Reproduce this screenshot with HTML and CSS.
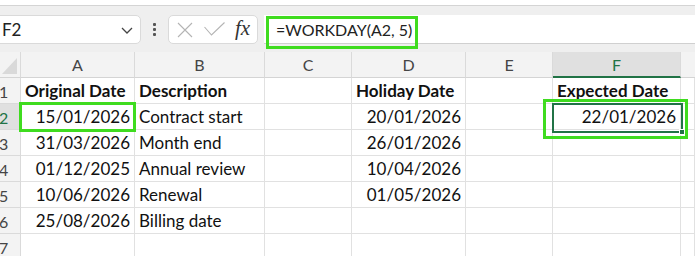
FILE: index.html
```html
<!DOCTYPE html>
<html>
<head>
<meta charset="utf-8">
<link rel="stylesheet" href="styles.css">
</head>
<body>
<div class="app">
  <div class="ribbon-edge"></div>
  <div class="formula-row">
    <div class="namebox">
      <span class="name">F2</span>
      <svg class="chev" width="12" height="7" viewBox="0 0 12 7"><path d="M1 1 L6 6 L11 1" fill="none" stroke="#444" stroke-width="1.3"/></svg>
    </div>
    <div class="dots"><i></i><i></i><i></i></div>
    <div class="fxbox">
      <svg width="16" height="16" viewBox="0 0 16 16" class="ic-x"><path d="M1 1 L15 15 M15 1 L1 15" stroke="#b4b4b4" stroke-width="1.1" fill="none"/></svg>
      <svg width="21" height="15" viewBox="0 0 21 15" class="ic-ok"><path d="M0.5 5 L7.5 13 L20.5 0.5" stroke="#b4b4b4" stroke-width="1.1" fill="none"/></svg>
      <span class="fx">fx</span>
    </div>
    <div class="formula">=WORKDAY(A2, 5)</div>
  </div>
  <div class="grid">
    <div class="corner"><span class="tri"></span></div>
    <div class="ch">A</div>
    <div class="ch">B</div>
    <div class="ch">C</div>
    <div class="ch">D</div>
    <div class="ch">E</div>
    <div class="ch sel">F</div>
    <div class="ch last"></div>

    <div class="rh">1</div>
    <div class="c b">Original Date</div>
    <div class="c b">Description</div>
    <div class="c"></div>
    <div class="c b">Holiday Date</div>
    <div class="c"></div>
    <div class="c b">Expected Date</div>
    <div class="c"></div>

    <div class="rh sel">2</div>
    <div class="c r">15/01/2026</div>
    <div class="c">Contract start</div>
    <div class="c"></div>
    <div class="c r">20/01/2026</div>
    <div class="c"></div>
    <div class="c r">22/01/2026</div>
    <div class="c"></div>

    <div class="rh">3</div>
    <div class="c r">31/03/2026</div>
    <div class="c">Month end</div>
    <div class="c"></div>
    <div class="c r">26/01/2026</div>
    <div class="c"></div>
    <div class="c"></div>
    <div class="c"></div>

    <div class="rh">4</div>
    <div class="c r">01/12/2025</div>
    <div class="c">Annual review</div>
    <div class="c"></div>
    <div class="c r">10/04/2026</div>
    <div class="c"></div>
    <div class="c"></div>
    <div class="c"></div>

    <div class="rh">5</div>
    <div class="c r">10/06/2026</div>
    <div class="c">Renewal</div>
    <div class="c"></div>
    <div class="c r">01/05/2026</div>
    <div class="c"></div>
    <div class="c"></div>
    <div class="c"></div>

    <div class="rh">6</div>
    <div class="c r">25/08/2026</div>
    <div class="c">Billing date</div>
    <div class="c"></div>
    <div class="c"></div>
    <div class="c"></div>
    <div class="c"></div>
    <div class="c"></div>

    <div class="rh">7</div>
    <div class="c"></div>
    <div class="c"></div>
    <div class="c"></div>
    <div class="c"></div>
    <div class="c"></div>
    <div class="c"></div>
    <div class="c"></div>
  </div>

  <div class="active-cell"><span class="handle"></span></div>
  <div class="hl hl-formula"></div>
  <div class="hl hl-a2"></div>
  <div class="hl hl-f2"></div>
</div>
</body>
</html>
```
FILE: styles.css
```css
* { box-sizing: border-box; }
html, body { margin: 0; padding: 0; }
body {
  width: 695px;
  height: 256px;
  overflow: hidden;
  background: #ffffff;
  font-family: "Lato", "Noto Sans", sans-serif;
  color: #111;
}
.app {
  position: relative;
  width: 695px;
  height: 256px;
  overflow: hidden;
}
.ribbon-edge {
  height: 6px;
  background: #ffffff;
  border-bottom: 1px solid #d4d4d4;
  box-shadow: 0 1px 2px rgba(0,0,0,0.12);
}
.formula-row {
  height: 46px;
  background: #efefef;
  display: flex;
  align-items: flex-start;
  padding-top: 9px;
}
.namebox {
  margin-left: -8px;
  width: 149px;
  height: 29px;
  background: #fff;
  border: 1px solid #dadada;
  border-radius: 5px;
  display: flex;
  align-items: center;
  justify-content: space-between;
  padding: 0 7px 0 8px;
}
.name { font-size: 17px; color: #222; padding-left: 1px; }
.chev { margin-top: 1px; }
.dots {
  width: 27px;
  height: 29px;
  display: flex;
  flex-direction: column;
  align-items: center;
  justify-content: center;
  gap: 2px;
}
.dots i {
  display: block;
  width: 3px;
  height: 3px;
  background: #555;
  border-radius: 1px;
}
.fxbox {
  width: 90px;
  height: 29px;
  background: #fff;
  border: 1px solid #dadada;
  border-radius: 5px;
  display: flex;
  align-items: center;
  padding-left: 8px;
}
.ic-x { margin-right: 11px; }
.ic-ok { margin-right: 10px; margin-top: -1px; }
.fx {
  font-family: "Liberation Serif", "DejaVu Serif", serif;
  font-style: italic;
  font-size: 21px;
  color: #333;
  margin-top: -3px;
}
.formula {
  flex: 1;
  margin-left: 6px;
  height: 29px;
  background: #fff;
  border-bottom: 1px solid #d0d0d0;
  font-size: 16px;
  color: #222;
  padding-left: 12px;
  line-height: 29px;
}
.grid {
  display: grid;
  grid-template-columns: 21px 114px 130px 87px 114px 87px 128px 1fr;
  grid-auto-rows: 26px;
}
.corner, .ch, .rh {
  background: #f3f3f3;
  border-right: 1px solid #dadada;
  border-bottom: 1px solid #d4d4d4;
  color: #454545;
  font-size: 16px;
}
.corner { position: relative; }
.tri {
  position: absolute;
  right: 3px;
  bottom: 3px;
  width: 0;
  height: 0;
  border-left: 15px solid transparent;
  border-bottom: 16px solid #d9d9d9;
}
.ch {
  display: flex;
  align-items: flex-end;
  justify-content: center;
  padding-bottom: 3px;
}
.ch.last { border-right: none; }
.ch.sel {
  background: #e0e0e0;
  color: #217346;
  border-bottom: 2px solid #217346;
  padding-bottom: 2px;
}
.rh {
  display: flex;
  align-items: flex-end;
  padding-bottom: 2px;
  text-indent: -1px;
  border-bottom-color: #dadada;
}
.rh.sel {
  background: #e0e0e0;
  color: #217346;
}
.c {
  border-right: 1px solid #e1e1e1;
  border-bottom: 1px solid #e1e1e1;
  font-size: 17px;
  color: #111;
  padding: 0 4px 2px 4px;
  display: flex;
  align-items: flex-end;
  white-space: nowrap;
  overflow: visible;
}
.c.b { font-weight: 700; }
.c.r { justify-content: flex-end; }

.active-cell {
  position: absolute;
  left: 552px;
  top: 103px;
  width: 131px;
  height: 30px;
  border: 2px solid #217346;
}
.handle {
  position: absolute;
  right: -4px;
  bottom: -4px;
  width: 6px;
  height: 6px;
  background: #217346;
  border: 1px solid #fff;
}
.hl {
  position: absolute;
  border: 3px solid #3fdc1f;
}
.hl-formula { left: 266px; top: 16px; width: 152px; height: 33px; }
.hl-a2 { left: 19px; top: 102px; width: 117px; height: 30px; }
.hl-f2 { left: 543px; top: 99px; width: 145px; height: 40px; }
```
